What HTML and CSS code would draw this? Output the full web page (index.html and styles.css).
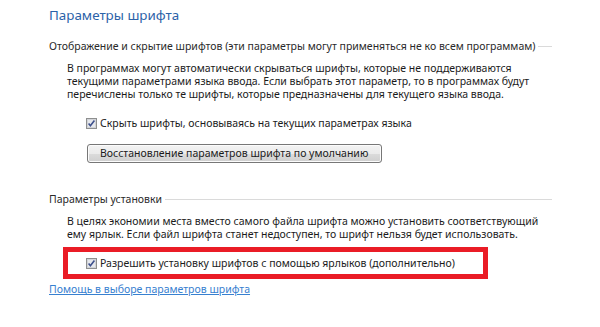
FILE: index.html
```html
<!DOCTYPE html>
<html lang="ru">
<head>
<meta charset="utf-8">
<link rel="stylesheet" href="styles.css">
</head>
<body>
<div class="page">
  <h1 class="title">Параметры шрифта</h1>

  <div class="group-head g1"><span>Отображение и скрытие шрифтов (эти параметры могут применяться не ко всем программам)</span><i class="rule"></i></div>
  <p class="para p1">В программах могут автоматически скрываться шрифты, которые не поддерживаются<br>текущими параметрами языка ввода. Если выбрать этот параметр, то в программах будут<br>перечислены только те шрифты, которые предназначены для текущего языка ввода.</p>
  <label class="check c1"><svg class="box" width="11" height="11" viewBox="0 0 11 11"><rect x="0.5" y="0.5" width="10" height="10" fill="#f4f4f4" stroke="#8e8f8f"/><rect x="1.5" y="1.5" width="8" height="8" fill="#e6e8ec" stroke="#d2d4d8"/><path d="M2.6 5.6 L4.4 7.8 L8.4 2.6" fill="none" stroke="#3c4f8c" stroke-width="1.6"/></svg><span>Скрыть шрифты, основываясь на текущих параметрах языка</span></label>
  <div class="btn-row"><button class="btn">Восстановление параметров шрифта по умолчанию</button></div>

  <div class="group-head g2"><span>Параметры установки</span><i class="rule"></i></div>
  <p class="para p2">В целях экономии места вместо самого файла шрифта можно установить соответствующий<br>ему ярлык. Если файл шрифта станет недоступен, то шрифт нельзя будет использовать.</p>
  <div class="highlight">
    <label class="check c2"><svg class="box" width="11" height="11" viewBox="0 0 11 11"><rect x="0.5" y="0.5" width="10" height="10" fill="#f4f4f4" stroke="#8e8f8f"/><rect x="1.5" y="1.5" width="8" height="8" fill="#e6e8ec" stroke="#d2d4d8"/><path d="M2.6 5.6 L4.4 7.8 L8.4 2.6" fill="none" stroke="#3c4f8c" stroke-width="1.6"/></svg><span>Разрешить установку шрифтов с помощью ярлыков (дополнительно)</span></label>
  </div>
  <a class="help" href="#">Помощь в выборе параметров шрифта</a>
</div>
</body>
</html>
```

FILE: styles.css
```css
html, body {
  margin: 0;
  padding: 0;
  background: #ffffff;
}
body {
  font-family: "Noto Sans", "Open Sans", sans-serif;
  font-size: 10.5px;
  color: #1b1b1b;
}
.page {
  width: 600px;
  height: 327px;
  padding-left: 49px;
  box-sizing: border-box;
  overflow: hidden;
}
.title {
  margin: 0;
  padding-top: 5px;
  font-size: 13.4px;
  line-height: 20px;
  font-weight: normal;
  color: #2c62a8;
}
.group-head {
  display: flex;
  align-items: center;
  width: 503px;
  line-height: 16px;
  color: #2a2a2a;
  white-space: nowrap;
}
.group-head .rule {
  flex: 1;
  height: 0;
  border-top: 1px solid #dadada;
  margin-left: 3px;
  margin-top: 1px;
}
.g1 { margin-top: 13px; }
.g2 { margin-top: 28px; }
.para {
  margin: 8px 0 0 18px;
  line-height: 13px;
  white-space: nowrap;
}
.check {
  display: flex;
  align-items: center;
  gap: 3px;
  line-height: 16px;
  white-space: nowrap;
}
.check .box { flex: none; }
.c1 {
  margin: 14px 0 0 37px;
}
.btn-row {
  margin: 13px 0 0 38px;
  display: flex;
}
.btn {
  width: 295px;
  height: 19px;
  padding: 0 0 0 12px;
  text-align: left;
  font: inherit;
  color: #1b1b1b;
  border: 1px solid #777777;
  border-radius: 3px;
  background: linear-gradient(#f3f3f3 0%, #ebebeb 50%, #dcdcdc 51%, #cfcfcf 100%);
  box-shadow: inset 0 0 0 1px #fcfcfc;
  line-height: 15px;
}
.highlight {
  margin: 6px 0 0 14px;
  width: 425px;
  height: 32px;
  box-sizing: border-box;
  border: 5px solid #ea1c26;
  display: flex;
  align-items: center;
  padding-left: 18px;
}
.help {
  display: inline-block;
  margin-top: 2px;
  line-height: 16px;
  color: #3780d0;
  text-decoration: underline;
}
```
